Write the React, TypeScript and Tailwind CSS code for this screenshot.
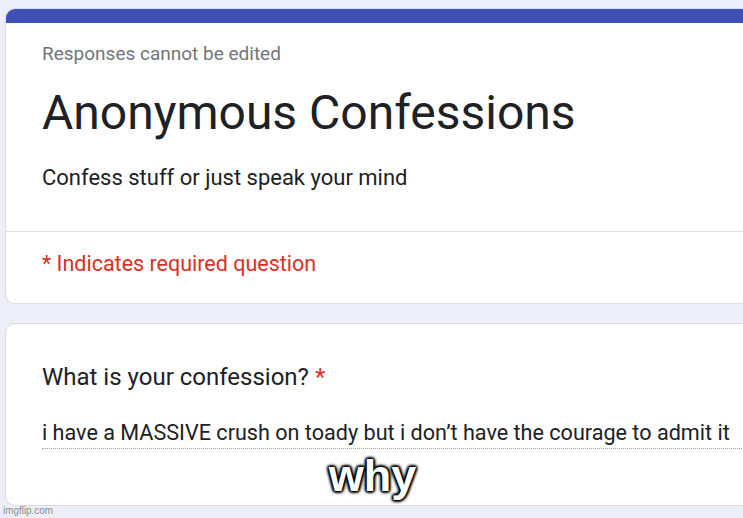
export default function App() {
  return (
    <div
      className="relative w-[743px] h-[518px] overflow-hidden bg-[#eceef8] pt-[8px] pl-[5px]"
      style={{ fontFamily: 'Roboto, "Liberation Sans", sans-serif' }}
    >
      {/* Header card */}
      <div className="w-[760px] h-[296px] bg-white rounded-[10px] border border-[#dadce0] overflow-hidden">
        <div className="h-[14px] bg-[#3f51b5]" />
        <div className="pl-[36px] pt-[19px]">
          <p className="text-[19px] leading-[24px] text-[#70757a]">Responses cannot be edited</p>
          <h1 className="mt-[19px] text-[48px] leading-[56px] text-[#202124]">Anonymous Confessions</h1>
          <p className="mt-[23px] text-[22px] leading-[28px] text-[#202124]">Confess stuff or just speak your mind</p>
        </div>
        <div className="mt-[39px] border-t border-[#dadce0]" />
        <p className="pl-[36px] pt-[18px] text-[21.5px] leading-[28px] text-[#d93025]">* Indicates required question</p>
      </div>

      {/* Question card */}
      <div className="mt-[19px] w-[760px] h-[183px] bg-white rounded-[10px] border border-[#dadce0]">
        <div className="pl-[36px] pt-[38px]">
          <p className="text-[24px] leading-[30px] text-[#202124]">
            What is your confession? <span className="text-[#d93025]">*</span>
          </p>
          <div className="mt-[27px] border-b border-dotted border-[#9aa0a6] pb-[1px]">
            <p className="text-[21.6px] leading-[28px] text-[#202124]">
              i have a MASSIVE crush on toady but i don’t have the courage to admit it
            </p>
          </div>
        </div>
      </div>

      {/* Meme caption */}
      <div className="absolute left-0 right-0 top-[449px] flex justify-center pl-[2px]">
        <span
          className="text-[45px] leading-[54px] font-bold text-white"
          style={{
            fontFamily: '"Liberation Sans", Arial, sans-serif',
            textShadow:
              '0 0 2px #000, 0 0 3px #000, 0 0 4px #000, 1px 1px 3px #000, -1px -1px 3px #000, 1px -1px 3px #000, -1px 1px 3px #000',
          }}
        >
          why
        </span>
      </div>

      <span
        className="absolute left-[3px] bottom-[2px] text-[11px] leading-[12px] text-[#8c8c8c] scale-x-90 origin-left"
        style={{ fontFamily: '"Liberation Sans", Arial, sans-serif' }}
      >
        imgflip.com
      </span>
    </div>
  )
}
